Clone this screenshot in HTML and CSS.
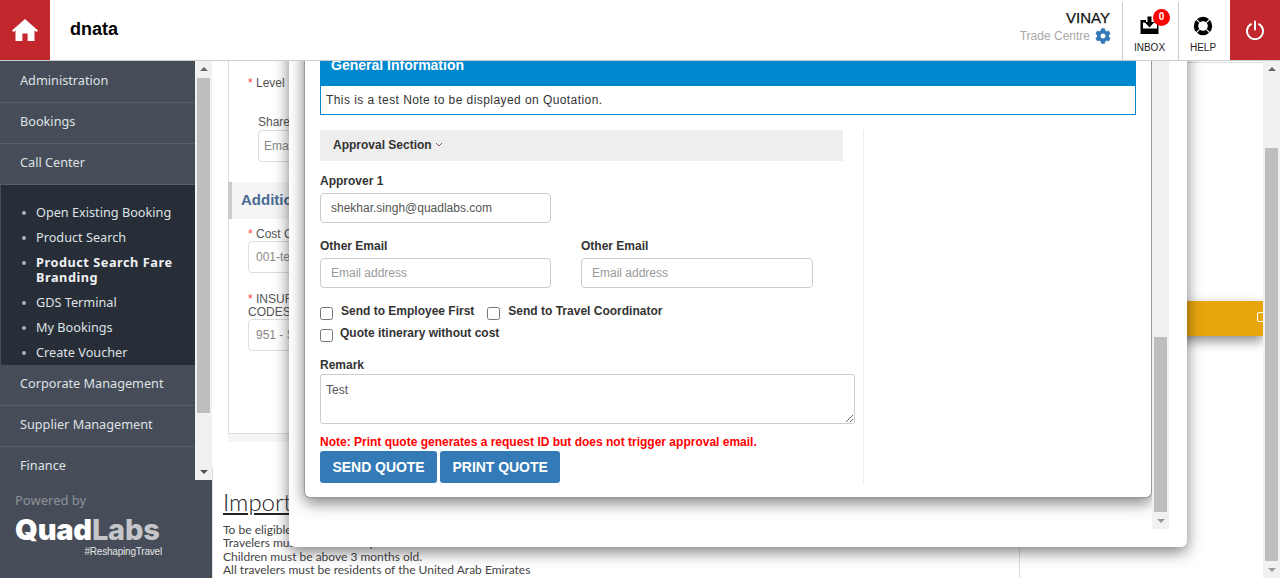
FILE: index.html
```html
<!DOCTYPE html>
<html lang="en">

<head>
    <meta charset="UTF-8">
    <meta name="viewport" content="width=device-width, initial-scale=1.0">
    <title>dnata Quotation</title>
    <link rel="stylesheet" href="styles.css">
</head>

<body>

    <!-- Top bar -->
    <header class="topbar">
        <a class="home-btn">
            <svg width="26" height="22" viewBox="0 0 26 22"><path d="M13 0 L26 11.6 L24.6 13 L22.5 11.6 V22 H15.6 V14.6 H10.4 V22 H3.5 V11.6 L1.4 13 L0 11.6 Z" fill="#fff"/></svg>
        </a>
        <div class="brand">dnata</div>
        <div class="user-box">
            <div class="user-name">VINAY</div>
            <div class="user-org">Trade Centre
                <svg width="16" height="16" viewBox="0 0 512 512"><path fill="#337ab7" d="M487.4 315.7l-42.6-24.6c4.3-23.2 4.3-47 0-70.2l42.6-24.6c4.9-2.8 7.1-8.6 5.5-14-11.1-35.6-30-67.8-54.7-94.6-3.8-4.1-10-5.1-14.8-2.3L380.8 110c-17.9-15.4-38.5-27.3-60.8-35.1V25.8c0-5.6-3.9-10.5-9.4-11.7-36.7-8.2-74.3-7.8-109.2 0-5.5 1.2-9.4 6.1-9.4 11.7V75c-22.2 7.9-42.8 19.8-60.8 35.1L88.7 85.5c-4.9-2.8-11-1.9-14.8 2.3-24.7 26.7-43.6 58.9-54.7 94.6-1.7 5.4.6 11.2 5.5 14L67.3 221c-4.3 23.2-4.3 47 0 70.2l-42.6 24.6c-4.9 2.8-7.1 8.6-5.5 14 11.1 35.6 30 67.8 54.7 94.6 3.8 4.1 10 5.1 14.8 2.3l42.6-24.6c17.9 15.4 38.5 27.3 60.8 35.1v49.2c0 5.6 3.9 10.5 9.4 11.7 36.7 8.2 74.3 7.8 109.2 0 5.5-1.2 9.4-6.1 9.4-11.7v-49.2c22.2-7.9 42.8-19.8 60.8-35.1l42.6 24.6c4.9 2.8 11 1.9 14.8-2.3 24.7-26.7 43.6-58.9 54.7-94.6 1.5-5.5-.7-11.3-5.6-14.1zM256 336c-44.1 0-80-35.9-80-80s35.9-80 80-80 80 35.9 80 80-35.9 80-80 80z"/></svg>
            </div>
        </div>
        <div class="tool-cell inbox-cell">
            <svg class="tool-icon" width="20" height="20" viewBox="0 0 20 20">
                <path d="M0.5 5 H6 V7.5 H3 V13.5 H17 V7.5 H14 V5 H18.5 V19 H0.5 Z" fill="#000"/>
                <path d="M7.5 1.5 H11.5 V7 H14.5 L9.5 12.5 L4.5 7 H7.5 Z" fill="#000"/>
            </svg>
            <span class="badge">0</span>
            <span class="tool-label">INBOX</span>
        </div>
        <div class="tool-cell help-cell">
            <svg class="tool-icon" width="20" height="20" viewBox="0 0 20 20">
                <circle cx="10" cy="10" r="7" fill="none" stroke="#000" stroke-width="4.4"/>
                <path d="M2.5 2.5 L6.6 6.6 M17.5 2.5 L13.4 6.6 M2.5 17.5 L6.6 13.4 M17.5 17.5 L13.4 13.4" stroke="#fff" stroke-width="1.1"/>
            </svg>
            <span class="tool-label">HELP</span>
        </div>
        <a class="power-btn">
            <svg width="20" height="20" viewBox="0 0 20 20"><path d="M6 4.2 A8 8 0 1 0 14 4.2" fill="none" stroke="#fff" stroke-width="2" stroke-linecap="round"/><path d="M10 1.5 V9.5" stroke="#fff" stroke-width="2" stroke-linecap="round"/></svg>
        </a>
    </header>

    <div class="layout">
        <!-- Left menu -->
        <aside class="sidebar">
            <div class="menu-scroll">
                <nav class="menu">
                    <a class="menu-item">Administration</a>
                    <a class="menu-item">Bookings</a>
                    <a class="menu-item">Call Center</a>
                    <ul class="submenu">
                        <li>Open Existing Booking</li>
                        <li>Product Search</li>
                        <li class="active">Product Search Fare Branding</li>
                        <li>GDS Terminal</li>
                        <li>My Bookings</li>
                        <li>Create Voucher</li>
                    </ul>
                    <a class="menu-item">Corporate Management</a>
                    <a class="menu-item">Supplier Management</a>
                    <a class="menu-item no-line">Finance</a>
                </nav>
                <div class="scrollbar menu-bar">
                    <span class="arrow-up"></span>
                    <span class="thumb"></span>
                    <span class="arrow-down"></span>
                </div>
            </div>
            <div class="powered">Powered by</div>
            <div class="logo">
                <div class="logo-name">Quad<span>Labs</span></div>
                <div class="logo-tag">#ReshapingTravel</div>
            </div>
        </aside>

        <!-- Page behind the modals -->
        <main class="page">
            <div class="page-top">
                <section class="form-panel">
                    <div class="field-label level"><i>*</i> Level 1 Approver</div>
                    <div class="share-label">Share With</div>
                    <div class="ghost-input share-input">Email address</div>
                    <h3 class="panel-title">Additional Information</h3>
                    <div class="field-label"><i>*</i> Cost Center</div>
                    <div class="ghost-input">001-test</div>
                    <div class="field-label insur"><i>*</i> INSURANCE<br>CODES</div>
                    <div class="ghost-input">951 - Standard</div>
                </section>
                <section class="side-panel">
                    <div class="orange-bar"><span class="orange-icon"></span></div>
                </section>
            </div>
            <section class="notes">
                <h2>Important Information</h2>
                <p>To be eligible for this insurance cover the following applies.</p>
                <p>Travelers must be under 75 years old.</p>
                <p>Children must be above 3 months old.</p>
                <p>All travelers must be residents of the United Arab Emirates</p>
            </section>
        </main>

        <div class="scrollbar page-bar">
            <span class="arrow-up"></span>
            <span class="thumb"></span>
            <span class="arrow-down"></span>
        </div>
    </div>

    <!-- Outer modal -->
    <div class="modal-outer">
        <!-- Quotation modal -->
        <div class="modal-inner">
            <div class="info-box">
                <div class="info-head">General Information</div>
                <div class="info-body">This is a test Note to be displayed on Quotation.</div>
            </div>

            <div class="approval">
                <div class="approval-left">
                    <div class="approval-head">Approval Section
                        <svg width="8" height="5" viewBox="0 0 8 5"><path d="M1 1 L4 4 L7 1" fill="none" stroke="#8a5a4a" stroke-width="1"/></svg>
                    </div>

                    <label class="lbl first">Approver 1</label>
                    <input class="txt" type="text" value="shekhar.singh@quadlabs.com">

                    <div class="email-row">
                        <div>
                            <label class="lbl">Other Email</label>
                            <input class="txt" type="text" placeholder="Email address">
                        </div>
                        <div>
                            <label class="lbl">Other Email</label>
                            <input class="txt wide" type="text" placeholder="Email address">
                        </div>
                    </div>

                    <div class="check-row">
                        <input type="checkbox"><span class="check-text">Send to Employee First</span>
                        <input class="second" type="checkbox"><span class="check-text">Send to Travel Coordinator</span>
                    </div>
                    <div class="check-row third">
                        <input type="checkbox"><span class="check-text">Quote itinerary without cost</span>
                    </div>

                    <label class="lbl remark">Remark</label>
                    <textarea class="area">Test</textarea>

                    <div class="note">Note: Print quote generates a request ID but does not trigger approval email.</div>
                    <div class="actions">
                        <button type="button">SEND QUOTE</button>
                        <button type="button">PRINT QUOTE</button>
                    </div>
                </div>
            </div>
        </div>
        <div class="scrollbar modal-bar">
            <span class="thumb"></span>
            <span class="arrow-down"></span>
        </div>
    </div>

</body>

</html>
```

FILE: styles.css
```css
body {
    margin: 0;
    height: 578px;
    overflow: hidden;
    font-family: "Liberation Sans", Arial, sans-serif;
    background: #fff;
    color: #333;
}

/* Top bar */
.topbar {
    position: relative;
    z-index: 5;
    display: flex;
    height: 60px;
    background: #fff;
    border-bottom: 1px solid #ccc;
}

.home-btn {
    display: flex;
    align-items: center;
    justify-content: center;
    width: 50px;
    background: #c1272d;
}

.brand {
    flex: 1;
    margin-left: 20px;
    font-size: 18px;
    font-weight: bold;
    line-height: 58px;
    color: #000;
}

.user-box {
    margin-right: 11px;
    padding-top: 9px;
    text-align: right;
}

.user-name {
    margin-right: 1px;
    font-size: 15px;
    line-height: 17px;
    color: #111;
    -webkit-text-stroke: 0.25px #111;
}

.user-org {
    display: flex;
    align-items: center;
    gap: 5px;
    margin-top: 2px;
    font-size: 12px;
    line-height: 16px;
    color: #aaa;
}

.tool-cell {
    position: relative;
    display: flex;
    flex-direction: column;
    align-items: center;
    box-sizing: border-box;
    margin-top: 2px;
    padding: 13px 2px 0 0;
    width: 56px;
    border-left: 1px solid #ccc;
}

.help-cell {
    width: 52px;
    padding: 14px 3px 0 0;
}

.help-cell .tool-label {
    margin-top: 6px;
}

.tool-label {
    margin-top: 7px;
    font-size: 10px;
    line-height: 12px;
    color: #222;
}

.badge {
    position: absolute;
    top: 7px;
    left: 30px;
    width: 17px;
    height: 17px;
    border-radius: 50%;
    background: #f00;
    color: #fff;
    font-size: 10px;
    font-weight: bold;
    line-height: 16px;
    text-align: center;
}

.power-btn {
    display: flex;
    align-items: center;
    justify-content: center;
    width: 50px;
    background: #c1272d;
}

/* Layout */
.layout {
    display: flex;
    height: 517px;
}

.sidebar {
    flex: none;
    width: 212px;
    background: #464d58;
}

.menu-scroll {
    display: flex;
    height: 419px;
    overflow: hidden;
}

.menu {
    flex: 1;
    padding-top: 1px;
    font-family: "Noto Sans", sans-serif;
    font-size: 12.7px;
    color: #dfe1e4;
}

.menu-item {
    display: block;
    height: 40px;
    padding-left: 20px;
    line-height: 36px;
    border-bottom: 1px solid #585f69;
}

.menu-item.no-line {
    border-bottom: none;
}

.submenu {
    margin: 0;
    padding: 20px 0 0 36px;
    height: 160px;
    list-style: none;
    background: #272e38;
    border-left: 1px solid #464d58;
}

.submenu li {
    position: relative;
    margin-left: -1px;
    margin-bottom: 10px;
    line-height: 15px;
}

.submenu li::before {
    content: "";
    position: absolute;
    left: -14px;
    top: 6px;
    width: 4px;
    height: 4px;
    border-radius: 50%;
    background: #aab0b8;
}

.submenu li.active {
    font-weight: bold;
    letter-spacing: 0.55px;
    color: #f0f1f3;
}

/* Scrollbars */
.scrollbar {
    position: relative;
    flex: none;
    width: 17px;
    background: #f1f1f1;
}

.scrollbar .thumb {
    position: absolute;
    left: 2px;
    width: 13px;
    background: #bebebe;
}

.arrow-up,
.arrow-down {
    position: absolute;
    left: 5px;
    width: 0;
    height: 0;
    border-left: 4px solid transparent;
    border-right: 4px solid transparent;
}

.arrow-up {
    top: 6px;
    border-bottom: 4px solid #666;
}

.arrow-down {
    bottom: 6px;
    border-top: 4px solid #555;
}

.menu-bar .thumb {
    top: 17px;
    height: 335px;
}

.page-bar .thumb {
    top: 87px;
    height: 413px;
}

.page-bar .arrow-down {
    border-top-color: #999;
}

.powered {
    margin: 11px 0 0 15px;
    font-family: "Noto Sans", sans-serif;
    font-size: 13px;
    line-height: 18px;
    color: #8d9197;
}

.logo {
    margin: 8px 0 0 15px;
    width: 147px;
    color: #fff;
}

.logo-name {
    font-family: Inter, sans-serif;
    font-weight: 900;
    font-size: 29px;
    line-height: 26px;
    letter-spacing: -0.2px;
}

.logo-name span {
    font-weight: 800;
    color: #c4c6c9;
}

.logo-tag {
    margin-top: 3px;
    font-size: 10px;
    line-height: 11px;
    letter-spacing: -0.2px;
    text-align: right;
    color: #e4e5e7;
}

/* Page behind the modals */
.page {
    flex: 1;
    min-width: 0;
    overflow: hidden;
}

.page-top {
    display: flex;
    height: 406px;
}

.form-panel {
    width: 700px;
    height: 372px;
    margin-left: 16px;
    background: #fff;
    border-left: 1px solid #ddd;
    border-bottom: 1px solid #ddd;
    box-shadow: 0 8px 0 #f5f5f5;
    font-size: 12px;
    color: #555;
}

.field-label {
    padding-left: 19px;
    line-height: 14px;
}

.field-label i {
    color: #f44;
    font-style: normal;
}

.level {
    padding-top: 15px;
}

.insur {
    margin-top: 20px;
    line-height: 13px;
}

.share-label {
    margin: 25px 0 0 29px;
    line-height: 14px;
}

.ghost-input {
    width: 180px;
    height: 30px;
    margin: 0 0 0 19px;
    padding-left: 7px;
    line-height: 30px;
    border: 1px solid #ddd;
    border-radius: 4px;
    color: #888;
}

.share-input {
    margin: 1px 0 0 29px;
    padding-left: 5px;
}

.panel-title {
    margin: 20px 0 8px -1px;
    padding-left: 9px;
    height: 37px;
    font-size: 15px;
    font-weight: bold;
    line-height: 36px;
    color: #4a6a94;
    background: #f5f5f5;
    border-left: 4px solid #ccc;
}

.side-panel {
    flex: 1;
    border-top: 1px solid #ddd;
    margin-top: 1px;
}

.orange-bar {
    position: relative;
    height: 35px;
    margin-top: 238px;
    background: #e8a60e;
    box-shadow: 0 5px 12px rgba(0, 0, 0, 0.45);
}

.orange-icon {
    position: absolute;
    right: -4px;
    top: 11px;
    width: 8px;
    height: 8px;
    border: 1px solid #fff;
    border-radius: 2px;
}

.notes {
    height: 111px;
    padding-left: 10px;
    border-top: 1px solid transparent;
    border-left: 1px solid #ddd;
    font-family: Lato, sans-serif;
    font-size: 12px;
    color: #444;
    background:
        linear-gradient(#ddd, #ddd) 0 -1px / 800px 1px no-repeat border-box,
        linear-gradient(#ddd, #ddd) 806px 80px / 1px 31px no-repeat;
}

.notes h2 {
    margin: 20px 0 7px;
    font-size: 24px;
    font-weight: 300;
    line-height: 28px;
    color: #222;
    text-decoration: underline;
}

.notes p {
    margin: 0;
    line-height: 13.4px;
}

/* Modals */
.modal-outer {
    position: absolute;
    z-index: 3;
    left: 289px;
    top: 0;
    width: 898px;
    height: 547px;
    background: #fff;
    border-radius: 0 0 6px 6px;
    box-shadow: 0 5px 15px rgba(0, 0, 0, 0.5);
}

.modal-inner {
    position: absolute;
    left: 15px;
    top: 0;
    width: 848px;
    height: 498px;
    box-sizing: border-box;
    padding: 44px 15px 0;
    background: #fff;
    border: 1px solid #999;
    border-top: none;
    border-radius: 0 0 6px 6px;
    box-shadow: 0 5px 15px rgba(0, 0, 0, 0.5);
    font-size: 12px;
    color: #333;
}

.modal-bar {
    position: absolute;
    left: 863px;
    top: 61px;
    height: 468px;
}

.modal-bar .thumb {
    top: 276px;
    height: 175px;
}

.modal-bar .arrow-down {
    border-top-color: #999;
}

.info-box {
    border: 1px solid #0088cf;
}

.info-head {
    height: 41px;
    padding-left: 10px;
    font-size: 14px;
    font-weight: bold;
    line-height: 40px;
    color: #fff;
    background: #0088cf;
}

.info-body {
    height: 28px;
    padding-left: 5px;
    line-height: 28px;
    letter-spacing: 0.43px;
    color: #333;
}

.approval {
    margin-top: 15px;
}

.approval-left {
    width: 543px;
    height: 354px;
    border-right: 1px solid #eee;
}

.approval-head {
    width: 510px;
    height: 31px;
    padding-left: 13px;
    font-weight: bold;
    line-height: 30px;
    color: #333;
    background: #eee;
}

.approval-head svg {
    margin: 0 0 2px 0;
}

.lbl {
    display: block;
    font-weight: bold;
    line-height: 14px;
    margin-bottom: 5px;
}

.lbl.first {
    margin-top: 13px;
}

.txt {
    display: block;
    box-sizing: border-box;
    width: 231px;
    height: 30px;
    padding: 0 10px;
    font-family: inherit;
    font-size: 12px;
    color: #555;
    border: 1px solid #ccc;
    border-radius: 4px;
    outline: none;
}

.txt.wide {
    width: 232px;
}

.txt::placeholder {
    color: #999;
}

.email-row {
    display: flex;
    gap: 30px;
    margin-top: 16px;
}

.check-row {
    display: flex;
    align-items: flex-start;
    margin-top: 16px;
    height: 16px;
}

.check-row input {
    flex: none;
    width: 13px;
    height: 13px;
    margin: 3px 0 0;
}

.check-row .second {
    margin-left: 13px;
}

.check-text {
    margin-left: 8px;
    font-weight: bold;
    line-height: 14px;
}

.third {
    margin-top: 6px;
}

.third .check-text {
    margin-left: 7px;
}

.lbl.remark {
    margin-top: 16px;
    margin-bottom: 2px;
}

.area {
    display: block;
    box-sizing: border-box;
    width: 535px;
    height: 50px;
    padding: 8px 5px;
    font-family: inherit;
    font-size: 12px;
    color: #555;
    border: 1px solid #ccc;
    border-radius: 3px;
    outline: none;
}

.note {
    margin-top: 11px;
    font-weight: bold;
    line-height: 14px;
    color: #f00;
}

.actions {
    display: flex;
    gap: 3px;
    margin-top: 2px;
}

.actions button {
    height: 32px;
    padding: 0 12.5px;
    font-family: inherit;
    font-size: 14px;
    font-weight: bold;
    letter-spacing: -0.05px;
    color: #fff;
    background: #337ab7;
    border: none;
    border-radius: 3px;
}
```
